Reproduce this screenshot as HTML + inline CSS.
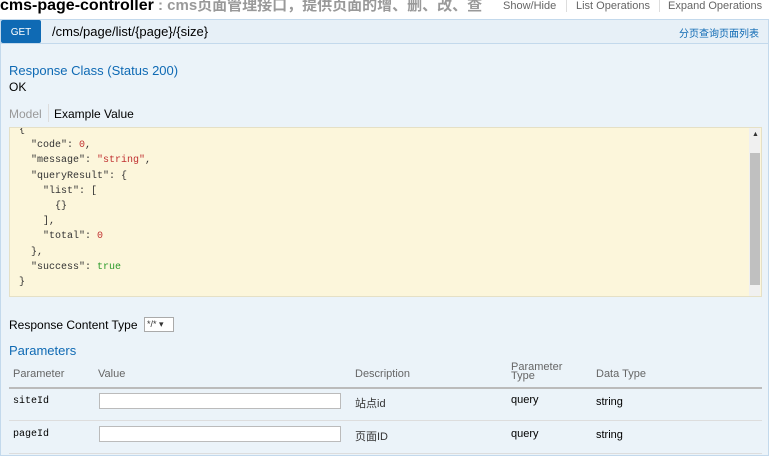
<!DOCTYPE html>
<html><head><meta charset="utf-8"><style>
*{margin:0;padding:0;box-sizing:border-box}
body{width:771px;height:456px;overflow:hidden;background:#fff;font-family:"Liberation Sans","Noto Sans CJK SC",sans-serif;font-size:12px;color:#333;position:relative}
.a{position:absolute;white-space:nowrap}
.mono{font-family:"Liberation Mono",monospace;font-size:10px}
</style></head><body>
<div class="a" style="left:0;top:-6px;font-size:16px;font-weight:bold;color:#000">cms-page-controller<span style="color:#999;font-size:15px"> : cms页面管理接口，提供页面的增、删、改、查</span></div>
<div class="a" style="left:503px;top:0;font-size:11px;color:#666">Show/Hide</div>
<div class="a" style="left:566px;top:0;width:1px;height:12px;background:#ddd"></div>
<div class="a" style="left:576px;top:0;font-size:11px;color:#666">List Operations</div>
<div class="a" style="left:659px;top:0;width:1px;height:12px;background:#ddd"></div>
<div class="a" style="left:668px;top:0;font-size:11px;color:#666">Expand Operations</div>

<div class="a" style="left:0;top:19px;width:769px;height:25px;background:#e7f0f7;border:1px solid #c3d9ec"></div>
<div class="a" style="left:1px;top:20px;width:40px;height:23px;background:#0f6ab4;color:#fff;font-size:10px;text-align:center;line-height:25px;border-radius:2px">GET</div>
<div class="a" style="left:52px;top:24px;font-size:13px;color:#000">/cms/page/list/{page}/{size}</div>
<div class="a" style="left:679px;top:25px;font-size:10px;color:#0f6ab4">分页查询页面列表</div>

<div class="a" style="left:0;top:44px;width:769px;height:412px;background:#ebf3f9;border:1px solid #c3d9ec;border-top:none"></div>
<div class="a" style="left:9px;top:63px;font-size:13px;color:#0f6ab4">Response Class (Status 200)</div>
<div class="a" style="left:9px;top:80px;font-size:12px;color:#000">OK</div>
<div class="a" style="left:9px;top:107px;font-size:12px;color:#999">Model</div>
<div class="a" style="left:48px;top:104px;width:1px;height:18px;background:#ddd"></div>
<div class="a" style="left:54px;top:107px;font-size:12px;color:#000">Example Value</div>

<div class="a" style="left:9px;top:127px;width:753px;height:170px;background:#fcf6db;border:1px solid #e5e0c6;overflow:hidden">
<div class="a mono" style="left:9px;top:-5px;line-height:15.2px;color:#333"><pre style="font-family:inherit">{
  "code": <span style="color:#c03030">0</span>,
  "message": <span style="color:#c03030">"string"</span>,
  "queryResult": {
    "list": [
      {}
    ],
    "total": <span style="color:#c03030">0</span>
  },
  "success": <span style="color:#2a9a2a">true</span>
}</pre></div>
</div>
<div class="a" style="left:749px;top:128px;width:11px;height:168px;background:#f0f0f0"></div>
<div class="a" style="left:750px;top:153px;width:10px;height:132px;background:#c0c0c0"></div>
<div class="a" style="left:752px;top:131px;font-size:7px;color:#333">▲</div>

<div class="a" style="left:9px;top:318px;font-size:12px;color:#000">Response Content Type</div>
<div class="a" style="left:144px;top:317px;width:30px;height:15px;background:#fff;border:1px solid #aaa;font-size:9px;line-height:13px;padding-left:2px">*/* ▾</div>
<div class="a" style="left:9px;top:343px;font-size:13px;color:#0f6ab4">Parameters</div>

<div class="a" style="left:13px;top:368px;font-size:11px;color:#666">Parameter</div>
<div class="a" style="left:98px;top:368px;font-size:11px;color:#666">Value</div>
<div class="a" style="left:355px;top:368px;font-size:11px;color:#666">Description</div>
<div class="a" style="left:511px;top:363px;font-size:11px;color:#666;line-height:9px">Parameter<br>Type</div>
<div class="a" style="left:596px;top:368px;font-size:11px;color:#666">Data Type</div>
<div class="a" style="left:9px;top:387px;width:753px;height:2px;background:#bbb"></div>

<div class="a mono" style="left:13px;top:396px;color:#000">siteId</div>
<div class="a" style="left:99px;top:393px;width:242px;height:16px;background:#fff;border:1px solid #bbb"></div>
<div class="a" style="left:355px;top:395px;font-size:11px">站点id</div>
<div class="a" style="left:511px;top:394px;font-size:11px;color:#000">query</div>
<div class="a" style="left:596px;top:396px;font-size:11px;color:#000">string</div>
<div class="a" style="left:9px;top:420px;width:753px;height:1px;background:#ddd"></div>

<div class="a mono" style="left:13px;top:429px;color:#000">pageId</div>
<div class="a" style="left:99px;top:426px;width:242px;height:16px;background:#fff;border:1px solid #bbb"></div>
<div class="a" style="left:355px;top:428px;font-size:11px">页面ID</div>
<div class="a" style="left:511px;top:428px;font-size:11px;color:#000">query</div>
<div class="a" style="left:596px;top:429px;font-size:11px;color:#000">string</div>
<div class="a" style="left:9px;top:453px;width:753px;height:1px;background:#ddd"></div>
</body></html>
